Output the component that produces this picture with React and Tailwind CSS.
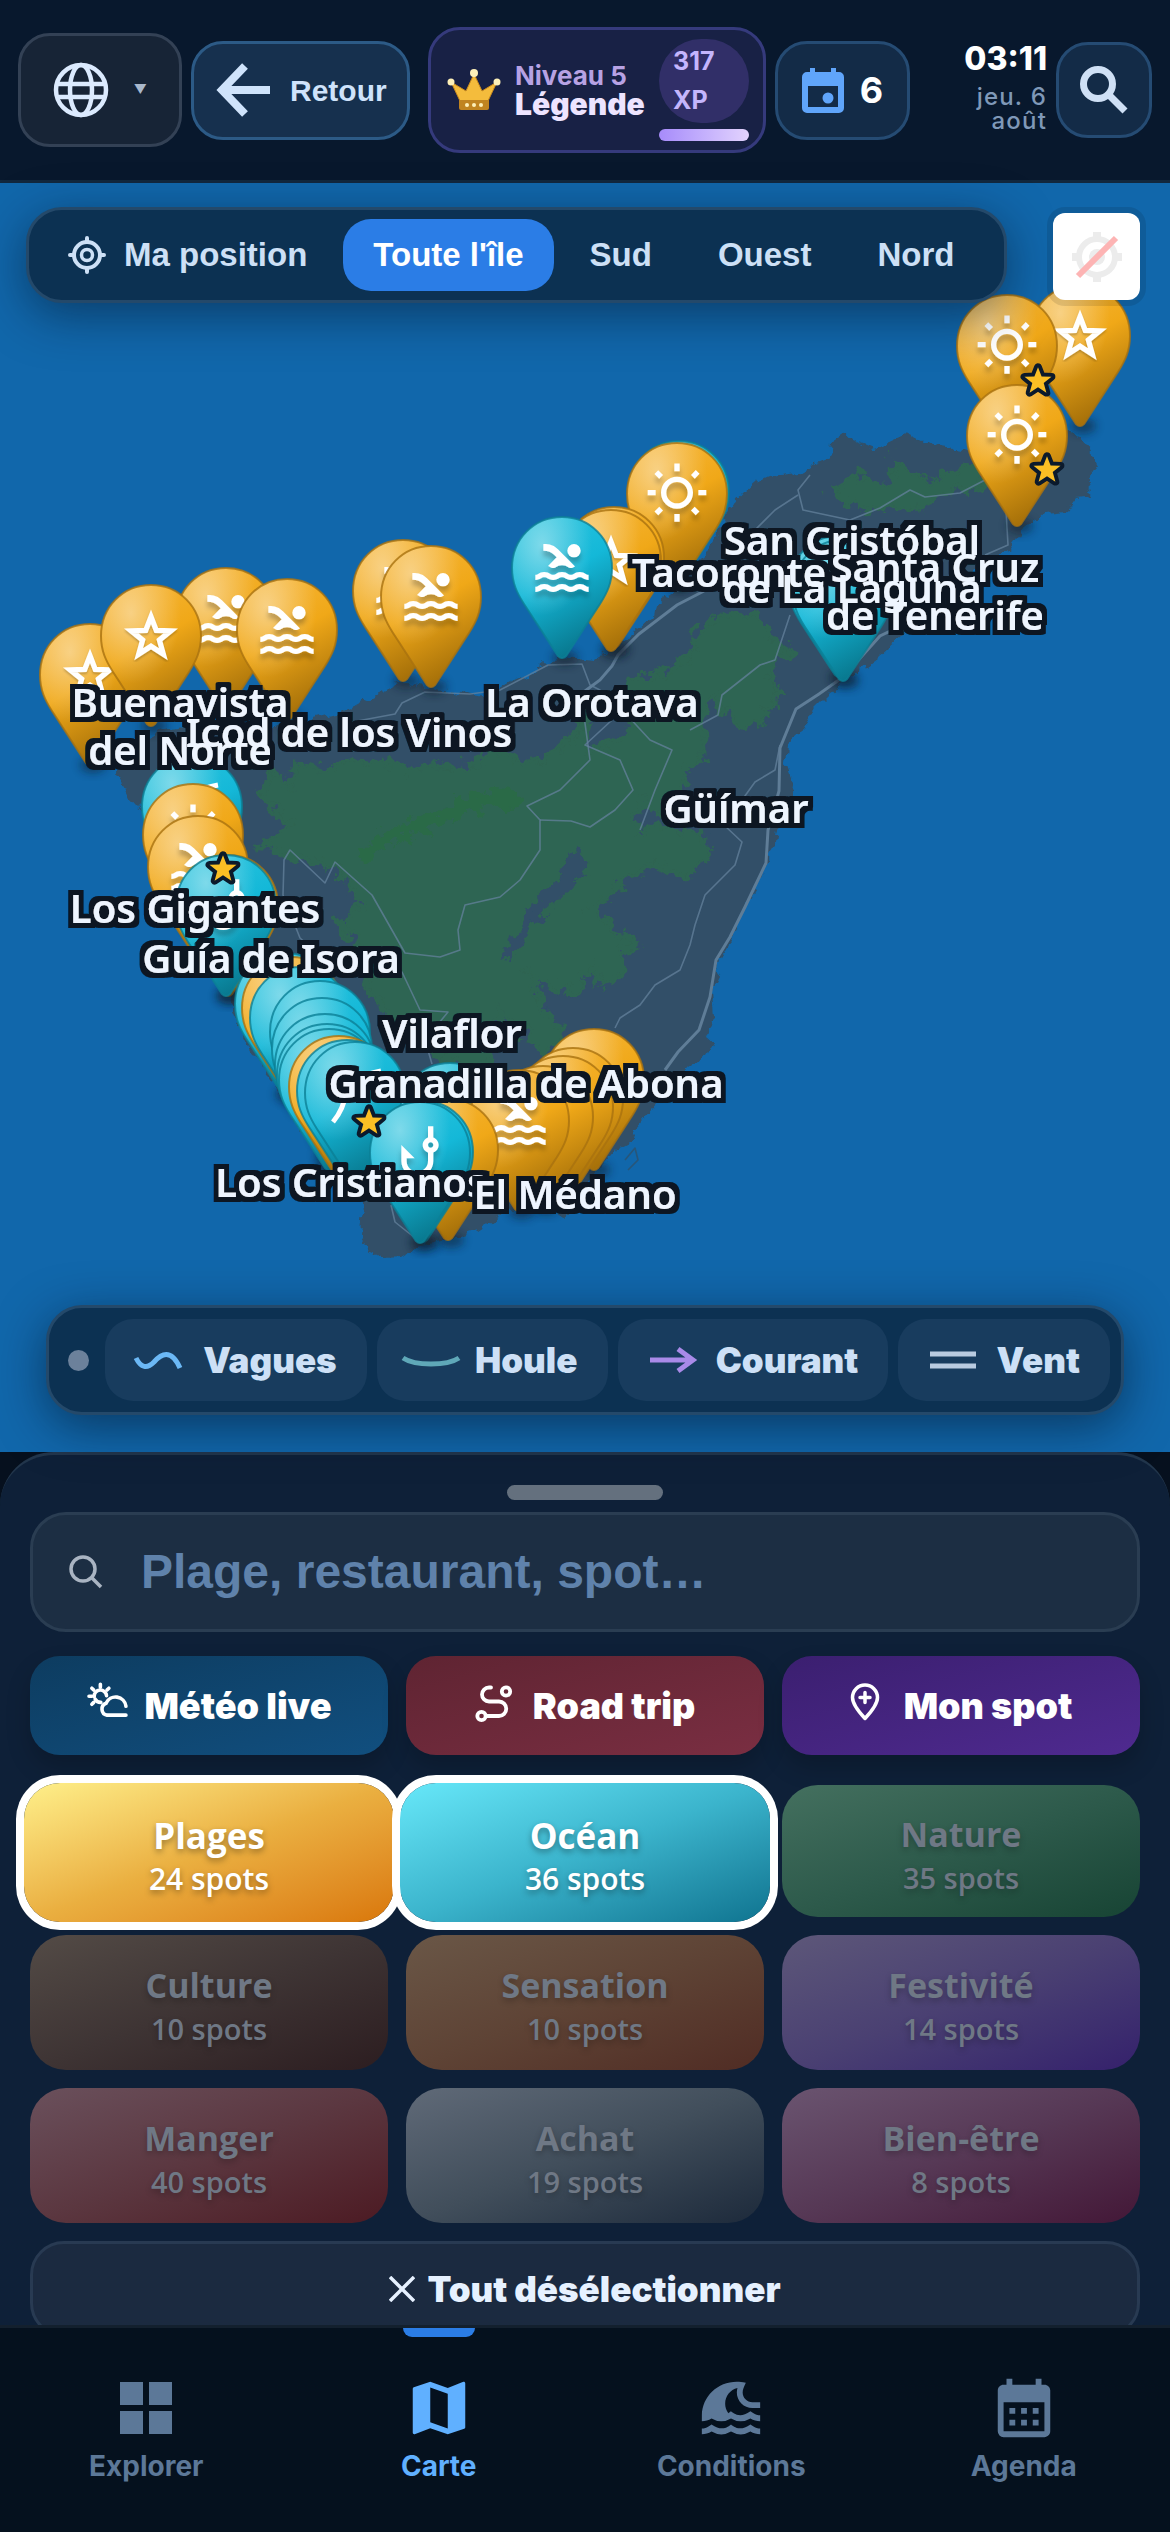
import React, { useState } from "react";
import { MdPool, MdOutlineWbSunny, MdPhishing, MdMap, MdTsunami, MdCalendarMonth } from "react-icons/md";

const ICONS = {
  swim: MdPool,
  sun: MdOutlineWbSunny,
  hook: MdPhishing,
};

// x = tip of the pin, y = top of the pin, in map units
const PINS = [
  { x: 1080, y: 285, kind: "gold", icon: "star" },
  { x: 1007, y: 295, kind: "gold", icon: "sun", fav: [1038, 381] },
  { x: 1017, y: 385, kind: "gold", icon: "sun", fav: [1047, 470] },
  { x: 679, y: 441, kind: "cyan" },
  { x: 677, y: 443, kind: "gold", icon: "sun" },
  { x: 614, y: 507, kind: "gold" },
  { x: 611, y: 510, kind: "gold", icon: "star" },
  { x: 562, y: 517, kind: "cyan", icon: "swim" },
  { x: 839, y: 536, kind: "cyan" },
  { x: 843, y: 540, kind: "cyan" },
  { x: 403, y: 540, kind: "gold", icon: "swim" },
  { x: 431, y: 546, kind: "gold", icon: "swim" },
  { x: 226, y: 568, kind: "gold", icon: "swim" },
  { x: 287, y: 579, kind: "gold", icon: "swim" },
  { x: 90, y: 624, kind: "gold", icon: "star" },
  { x: 151, y: 585, kind: "gold", icon: "star" },
  { x: 192, y: 756, kind: "cyan", icon: "rod" },
  { x: 193, y: 784, kind: "gold", icon: "sun" },
  { x: 198, y: 816, kind: "gold", icon: "swim" },
  { x: 228, y: 855, kind: "gold" },
  { x: 226, y: 855, kind: "cyan", icon: "hook", fav: [223, 869] },
  { x: 285, y: 953, kind: "cyan" },
  { x: 292, y: 957, kind: "gold" },
  { x: 300, y: 967, kind: "cyan" },
  { x: 320, y: 981, kind: "cyan" },
  { x: 322, y: 998, kind: "cyan" },
  { x: 325, y: 1014, kind: "cyan" },
  { x: 327, y: 1024, kind: "cyan" },
  { x: 329, y: 1029, kind: "cyan" },
  { x: 594, y: 1029, kind: "gold" },
  { x: 339, y: 1036, kind: "gold" },
  { x: 347, y: 1040, kind: "cyan" },
  { x: 355, y: 1042, kind: "cyan", icon: "rod" },
  { x: 573, y: 1048, kind: "gold" },
  { x: 563, y: 1056, kind: "gold" },
  { x: 450, y: 1063, kind: "cyan" },
  { x: 543, y: 1066, kind: "gold" },
  { x: 519, y: 1070, kind: "gold", icon: "swim" },
  { x: 448, y: 1099, kind: "gold" },
  { x: 423, y: 1101, kind: "cyan" },
  { x: 420, y: 1102, kind: "cyan", icon: "hook", fav: [369, 1122] },
];

const TOWNS = [
  { x: 180, y: 717, lines: ["Buenavista", "del Norte"] },
  { x: 349, y: 747, lines: ["Icod de los Vinos"] },
  { x: 592, y: 717, lines: ["La Orotava"] },
  { x: 852, y: 555, lines: ["San Cristóbal", "de La Laguna"] },
  { x: 729, y: 587, lines: ["Tacoronte"] },
  { x: 935, y: 582, lines: ["Santa Cruz", "de Tenerife"] },
  { x: 736, y: 823, lines: ["Güímar"] },
  { x: 195, y: 923, lines: ["Los Gigantes"] },
  { x: 271, y: 973, lines: ["Guía de Isora"] },
  { x: 452, y: 1048, lines: ["Vilaflor"] },
  { x: 526, y: 1098, lines: ["Granadilla de Abona"] },
  { x: 351, y: 1197, lines: ["Los Cristianos"] },
];

const CATEGORIES = [
  { name: "Plages", count: 24, bg: "from-[#fef08a] via-[#eaaf40] to-[#d97706]" },
  { name: "Océan", count: 36, bg: "from-[#67e8f9] via-[#3bb4cc] to-[#0e7490]" },
  { name: "Nature", count: 35, bg: "from-[#44705f] via-[#2d5a4b] to-[#174434]" },
  { name: "Culture", count: 10, bg: "from-[#534b46] via-[#3e3434] to-[#2c1d20]" },
  { name: "Sensation", count: 10, bg: "from-[#6a5747] via-[#5e4335] to-[#502c24]" },
  { name: "Festivité", count: 14, bg: "from-[#5d5779] via-[#4a4072] to-[#35206c]" },
  { name: "Manger", count: 40, bg: "from-[#6a505c] via-[#5b3740] to-[#4c1a23]" },
  { name: "Achat", count: 19, bg: "from-[#606a78] via-[#414e5b] to-[#1d2a3b]" },
  { name: "Bien-être", count: 8, bg: "from-[#6a5470] via-[#563855] to-[#431737]" },
];

const REGIONS = ["Toute l'île", "Sud", "Ouest", "Nord"];

const COAST =
  "M115 772 L135 745 165 728 205 722 250 728 300 722 337 713 358 705 377 695 402 683 432 688 459 693 486 697 509 683 536 672 551 660 564 657 593 660 620 644 639 630 654 616 656 605 675 591 700 562 719 530 731 508 742 494 754 483 769 476 800 473 815 464 830 458 832 441 845 432 853 439 876 448 907 434 922 441 941 446 968 450 1000 440 1040 446 1060 425 1083 439 1092 455 1098 466 1087 483 1091 496 1077 498 1067 512 1044 514 1022 530 1010 548 985 562 960 585 930 612 903 634 876 659 853 676 838 687 830 694 815 709 800 734 788 744 786 766 794 787 788 809 777 830 775 842 768 853 764 873 745 907 730 943 716 967 720 977 712 993 714 1018 707 1037 714 1043 707 1055 688 1067 665 1093 653 1108 634 1130 630 1142 615 1150 596 1173 577 1200 565 1220 545 1206 509 1210 478 1230 455 1237 421 1245 402 1257 383 1258 367 1250 361 1237 363 1203 340 1175 300 1130 276 1087 249 1047 237 1020 225 990 200 950 185 900 170 860 141 808 132 803 126 790Z";

const FOREST =
  "M260 795 L275 772 288 785 300 765 330 768 350 758 385 762 410 768 470 765 500 750 520 765 560 750 580 728 590 700 586 748 615 745 639 716 627 680 666 673 696 651 702 626 735 612 761 619 770 635 790 651 770 668 777 691 761 723 735 726 715 694 702 700 704 737 704 759 685 770 681 782 692 800 672 822 640 800 636 832 649 827 699 830 710 850 687 877 653 863 615 890 592 910 626 937 638 947 620 952 622 977 600 983 592 965 577 993 553 987 530 977 546 1010 565 1033 542 1053 520 1025 501 1010 490 1066 460 1068 425 1045 402 1027 367 987 367 953 337 923 363 907 337 870 283 853 258 848 290 825Z";

const GlobeIcon = () => (
  <svg className="h-16 w-14" viewBox="0 0 56 64" fill="none" stroke="#dbeafe" strokeWidth="4.5">
    <circle cx="28" cy="32" r="25" />
    <ellipse cx="28" cy="32" rx="11" ry="25" />
    <path d="M4 26h48M4 39h48" />
  </svg>
);

const TargetIcon = () => (
  <svg className="h-[38px] w-[38px]" viewBox="0 0 38 38" fill="none" stroke="currentColor" strokeWidth="4" strokeLinecap="round">
    <circle cx="19" cy="19" r="13" />
    <circle cx="19" cy="19" r="5.5" strokeWidth="3.5" />
    <path d="M19 2v4M19 32v4M2 19h4M32 19h4" />
  </svg>
);

const CrownIcon = () => (
  <svg className="h-[46px] w-[54px]" viewBox="0 0 54 46">
    <path d="M13 34 4 15l15 9L27 7l8 17 15-9-9 19Z" fill="#f4bc3c" stroke="#c98a1e" />
    <path d="M12 33h30v8a2 2 0 0 1-2 2H14a2 2 0 0 1-2-2Z" fill="#c08420" />
    <g fill="#fdf0b8">
      <circle cx="27" cy="6" r="4" />
      <circle cx="4" cy="15" r="3.5" />
      <circle cx="50" cy="15" r="3.5" />
      <circle cx="20" cy="38" r="2" />
      <circle cx="27" cy="38" r="2" />
      <circle cx="34" cy="38" r="2" />
    </g>
  </svg>
);

const DayIcon = () => (
  <svg className="h-12 w-[42px]" viewBox="0 0 42 48">
    <path
      fillRule="evenodd"
      d="M8 2h5v4h16V2h5v4h3a5 5 0 0 1 5 5v31a5 5 0 0 1-5 5H5a5 5 0 0 1-5-5V11a5 5 0 0 1 5-5h3Zm-2 18v21h30V20Z"
      fill="#60a5fa"
    />
    <circle cx="26" cy="32" r="5.5" fill="#60a5fa" />
  </svg>
);

const MagnifierIcon = () => (
  <svg className="h-[50px] w-[50px]" viewBox="0 0 50 50" fill="none" stroke="#cfe0f5" strokeWidth="7">
    <circle cx="19" cy="19" r="14.5" />
    <path d="m29 29 17 17" />
  </svg>
);

const WeatherIcon = () => (
  <svg className="mb-3 h-[36px] w-[42px]" viewBox="0 0 42 38" fill="none" stroke="currentColor" strokeWidth="3.8" strokeLinecap="round">
    <path d="M7.5 15.5a6.500 6.500 0 1 1 13 -1M8.500 18a6.500 6.500 0 0 0 6 3.500" />
    <path d="M14 2.500v3M2 15h3M5 6.500l2 2M23 6.500l-2 2M5 23.500l2-2" />
    <path d="M21 35h20M41 25.500A11 11 0 0 0 20 22.500a6.500 6.500 0 0 0 1 12.500" />
  </svg>
);

const RouteIcon = () => (
  <svg className="mb-1 h-[38px] w-[38px]" viewBox="0 0 38 38" fill="none" stroke="currentColor" strokeWidth="3.800" strokeLinecap="round">
    <circle cx="31" cy="6.500" r="4.200" />
    <circle cx="6.500" cy="31" r="4.200" />
    <path d="M16 2.500h-2a7 7 0 0 0 0 14h10a7 7 0 0 1 0 14.500H12" />
  </svg>
);

const SpotIcon = () => (
  <svg className="mb-2 h-[38px] w-[30px]" viewBox="0 0 30 38" fill="none" stroke="currentColor" strokeWidth="3.500" strokeLinecap="round">
    <path d="M15 35.500C8 28 2.500 21 2.500 14.500a12.500 12.500 0 0 1 25 0C27.500 21 22 28 15 35.500Z" strokeLinejoin="round" />
    <path d="M15 9.500v10M10 14.500h10" />
  </svg>
);

const STAR = "M0 -23 6 -7.500 22.500 -7 9.500 3.500 14 19.500 0 10.500 -14 19.500 -9.500 3.500 -22.500 -7 -6 -7.500Z";

const PinGlyph = ({ icon }) => {
  if (icon === "star") {
    return <path d={STAR} transform="translate(50 52) scale(0.88)" fill="none" stroke="#fff" strokeWidth="6" filter="url(#glyph)" />;
  }
  if (icon === "rod") {
    return <path d="M28 80C38 68 40 58 41 50 44 38 60 32 76 29" fill="none" stroke="#fff" strokeWidth="5" />;
  }
  const Glyph = ICONS[icon];
  return <Glyph x="18" y="19" size={64} color="#fff" filter="url(#glyph)" />;
};

const Pin = ({ x, y, kind, icon }) => {
  const shape = "M50 0C22 0 0 22 0 51 0 66 5 76 12 87L46 139Q50 143 54 139L88 87C95 76 100 66 100 51 100 22 78 0 50 0Z";
  return (
    <g transform={`translate(${x - 50} ${y})`}>
      <ellipse cx="53" cy="141" rx="13" ry="8" fill="#0b1a2a" opacity="0.5" filter="url(#soft)" />
      <path d={shape} fill={`url(#${kind})`} />
      <path
        d={shape}
        fill="url(#shine)"
        stroke={kind === "gold" ? "#a9720f" : "#0b7f96"}
        strokeWidth="2"
        strokeOpacity="0.8"
      />
      {icon && <PinGlyph icon={icon} />}
    </g>
  );
};

const Town = ({ x, y, lines }) => (
  <text x={x} y={y} textAnchor="middle">
    {lines.map((line, i) => (
      <tspan key={line} x={x} dy={i ? 48 : 0}>
        {line}
      </tspan>
    ))}
  </text>
);

const IslandMap = () => (
  <svg className="block h-auto w-full bg-[#1167ab]" viewBox="0 183 1170 1269" role="img" aria-label="Carte de Tenerife">
    <defs>
      <linearGradient id="gold" x1="0.2" y1="0" x2="0.6" y2="1">
        <stop offset="0" stopColor="#f6b63a" />
        <stop offset="0.45" stopColor="#f0a818" />
        <stop offset="1" stopColor="#a06c08" />
      </linearGradient>
      <linearGradient id="cyan" x1="0.2" y1="0" x2="0.6" y2="1">
        <stop offset="0" stopColor="#2bc4de" />
        <stop offset="0.45" stopColor="#14b8d8" />
        <stop offset="1" stopColor="#08748a" />
      </linearGradient>
      <radialGradient id="shine" cx="0.3" cy="0.2" r="0.5">
        <stop offset="0" stopColor="#fff" stopOpacity="0.42" />
        <stop offset="1" stopColor="#fff" stopOpacity="0" />
      </radialGradient>
      <filter id="soft" x="-50%" y="-50%" width="200%" height="200%">
        <feGaussianBlur stdDeviation="4" />
      </filter>
      <filter id="glyph" x="-20%" y="-20%" width="140%" height="140%">
        <feDropShadow dx="0" dy="2" stdDeviation="1" floodColor="#000" floodOpacity="0.25" />
      </filter>
      <filter id="rough" x="-5%" y="-5%" width="110%" height="110%">
        <feTurbulence type="fractalNoise" baseFrequency="0.09" numOctaves="3" seed="4" />
        <feDisplacementMap in="SourceGraphic" scale="12" xChannelSelector="R" yChannelSelector="G" />
      </filter>
      <filter id="rougher" x="-5%" y="-5%" width="110%" height="110%">
        <feTurbulence type="fractalNoise" baseFrequency="0.08" numOctaves="4" seed="9" />
        <feDisplacementMap in="SourceGraphic" scale="26" xChannelSelector="R" yChannelSelector="G" />
      </filter>
      <filter id="halo" filterUnits="userSpaceOnUse" x="0" y="183" width="1170" height="1269">
        <feMorphology in="SourceAlpha" operator="dilate" radius="5" result="fat" />
        <feFlood floodColor="#081624" />
        <feComposite in2="fat" operator="in" result="dark" />
        <feMerge>
          <feMergeNode in="dark" />
          <feMergeNode in="SourceGraphic" />
        </feMerge>
      </filter>
    </defs>

    <path d={COAST} fill="#305068" filter="url(#rough)" />
    <g filter="url(#rougher)">
      <path d={FOREST} fill="#2e6552" stroke="#2e6552" strokeWidth="5" />
      <path
        d="M830 491 861 476 888 484 893 455 903 473 926 476 940 482 953 469 980 466 985 487 934 494 922 509 900 505 876 509 853 507Z"
        fill="#2e6552"
        stroke="#2e6552"
        strokeWidth="4"
      />
      <path d="M574 850 593 867 570 888 545 910 522 945 507 962 503 947 536 903 558 880Z" fill="#305068" />
      <path d="M360 856 385 838 430 822 465 806 500 796 520 806" fill="none" stroke="#2c6b46" strokeWidth="14" />
    </g>

    {/* roads */}
    <g fill="none" stroke="#64829c" strokeWidth="1.6" strokeOpacity="0.75" strokeLinejoin="round">
      <path d="M340 735 352 722 395 714 402 703 425 692 470 694 500 690 548 665 582 664 590 685 600 690 584 716 590 760 560 790 527 806 540 820 540 850 520 880 500 897 465 905 458 930 460 950 440 957 405 953 372 895 335 862 325 883 290 850 284 860 283 895 300 938 325 960 402 972 420 1010 448 1012 425 1040 432 1064" />
      <path d="M540 820 571 821 590 827 615 810 633 790 620 760 585 745 612 720 600 700 626 714 650 740 672 750 655 790 640 830" />
      <path d="M790 615 775 660 760 665 722 695 718 715 690 730" />
      <path d="M810 475 798 490 803 510 850 520 880 508 910 490 925 497 960 493 985 480" />
      <path d="M798 495 775 510 755 530 740 545" />
      <path d="M1006 510 1008 545 985 555" />
      <path d="M780 745 775 770 755 782 724 825 742 842 735 865 705 895 695 925 690 945 680 970 655 985 640 1005 620 1018 615 1028" />
      <path d="M391 1205 395 1222 415 1238" />
      <path d="M625 1160 635 1148 638 1160 628 1170" stroke="#305068" />
    </g>
    <path
      d="M585 691 600 680 612 666 618 655 639 634 677 605 704 591M903 625 880 636 843 677 819 694 796 709 780 748 779 791 768 830 766 863 745 907 730 937 716 960 710 997 699 1030 678 1052 665 1070"
      fill="none"
      stroke="#5f7d97"
      strokeWidth="3"
    />

    {PINS.map((pin, i) => (
      <Pin key={i} {...pin} />
    ))}

    {PINS.filter((pin) => pin.fav).map(({ fav: [x, y] }) => (
      <path
        key={`${x}-${y}`}
        d={STAR}
        transform={`translate(${x} ${y}) scale(0.6)`}
        fill="#fbbf24"
        stroke="#0b1a2c"
        strokeWidth="13"
        strokeLinejoin="round"
        paintOrder="stroke"
      />
    ))}

    <g className="font-['Noto_Sans',sans-serif] text-[40px] font-semibold" fill="#eef5ff">
      <g filter="url(#halo)">
        {TOWNS.map((town) => (
          <Town key={town.lines[0]} {...town} />
        ))}
      </g>
      <g filter="url(#halo)">
        <Town x={575} y={1209} lines={["El Médano"]} />
      </g>
    </g>
  </svg>
);

const Header = () => (
  <header className="flex items-center gap-[9px] border-b-[3px] border-[#12283e] bg-[#08182d] px-[18px] py-[27px] font-['Inter',sans-serif]">
    <button aria-label="Langue" className="flex h-[114px] w-[164px] items-center justify-between rounded-[32px] border-[3px] border-[#334155] bg-[#172436] pr-8 pl-8">
      <GlobeIcon />
      <span className="text-[13px] text-[#a9b8cc]">▼</span>
    </button>
    <button className="mr-[9px] flex h-[99px] w-[219px] items-center gap-5 rounded-[32px] border-[3px] border-[#2c5a86] bg-[#16304e] pl-[22px] font-['Liberation_Sans',sans-serif] text-[30px] font-bold text-[#cfe3fb]">
      <svg className="h-[54px] w-[54px]" viewBox="0 0 54 54" fill="none" stroke="#cfe3fb" strokeWidth="8">
        <path d="M54 27H7M29 3 6 27l23 24" />
      </svg>
      Retour
    </button>
    <button className="flex h-[126px] w-[338px] items-center rounded-[32px] border-[3px] border-[#353a7c] bg-[#182145] pl-4 text-left">
      <CrownIcon />
      <span className="ml-[14px] flex flex-1 flex-col font-bold">
        <span className="text-[26px] leading-[27px] text-[#b7a2e4]">Niveau 5</span>
        <span className="text-[30px] leading-[30px] font-black text-[#ede4ff]">Légende</span>
      </span>
      <span className="mr-[14px] flex w-[90px] flex-col gap-[6px]">
        <span className="rounded-full bg-[#312f68] px-[14px] py-[3px] text-[25px] leading-[39px] font-bold text-[#c4b5fd]">317 XP</span>
        <span className="h-3 rounded-full bg-linear-to-r from-[#a78bfa] to-[#e3d3fd]" />
      </span>
    </button>
    <button aria-label="Agenda du jour" className="flex h-[99px] w-[135px] items-center justify-center gap-4 rounded-[32px] border-[3px] border-[#254b73] bg-[#132b47] text-[36px] font-bold text-white">
      <DayIcon />6
    </button>
    <div className="flex flex-1 flex-col items-end self-start pt-[14px] text-right">
      <span className="text-[32px] leading-9 font-extrabold text-white">03:11</span>
      <span className="mt-2 w-[90px] text-[24px] leading-6 font-medium tracking-wider text-[#7f98b8]">jeu. 6 août</span>
    </div>
    <button aria-label="Rechercher" className="flex h-24 w-24 items-center justify-center rounded-[32px] border-[3px] border-[#254b73] bg-[#132b47]">
      <MagnifierIcon />
    </button>
  </header>
);

const LAYERS = [
  { name: "Vagues", icon: <path d="M1 18C6 28 12 29 19 22 26 14 36 8 45 28" stroke="#6bb8f5" /> },
  { name: "Houle", icon: <path d="M-4 18C8 26 40 26 52 18" stroke="#5fa8b8" /> },
  { name: "Courant", icon: <path d="M2 20h42M30 9l15 11-15 11" stroke="#a98ae8" /> },
  { name: "Vent", icon: <path d="M1 14h46M1 26h46" stroke="#b9cbe0" /> },
];

const MapSection = () => {
  const [region, setRegion] = useState("Toute l'île");
  return (
    <section className="relative">
      <IslandMap />

      <div className="absolute top-6 left-[26px] flex gap-[6px] rounded-[36px] border-[3px] border-[#24496a] bg-[#0c3152] p-[9px] pr-5 font-['Liberation_Sans',sans-serif] text-[33px] leading-[72px] font-bold text-[#cde0f6] shadow-[0_12px_48px_rgba(4,20,40,0.5)]">
        <button className="flex items-center gap-[18px] px-[30px]">
          <TargetIcon />
          Ma position
        </button>
        {REGIONS.map((name) => (
          <button
            key={name}
            onClick={() => setRegion(name)}
            className={`rounded-[28px] px-[30px] ${region === name ? "bg-[#2b7de6] text-white" : ""}`}
          >
            {name}
          </button>
        ))}
      </div>

      <button aria-label="Localisation désactivée" className="absolute top-[30px] right-[30px] flex h-[87px] w-[87px] items-center justify-center rounded-xl bg-white shadow-[0_0_0_6px_rgba(0,0,0,0.1)]">
        <svg className="h-[52px] w-[52px]" viewBox="0 0 52 52" fill="none" stroke="#ececec" strokeWidth="6">
          <circle cx="26" cy="26" r="18" />
          <circle cx="26" cy="26" r="8" fill="#ececec" stroke="none" />
          <path d="M26 1v6M26 45v6M1 26h6M45 26h6" strokeWidth="8" />
          <path d="M7 45 45 7" stroke="#fdb4b4" />
        </svg>
      </button>

      <div className="absolute inset-x-[46px] bottom-[37px] flex items-center gap-[10px] rounded-[36px] border-[3px] border-[#24496a] bg-[#0c3152] p-[11px] pl-[19px] shadow-[0_12px_48px_rgba(4,20,40,0.55)]">
        <span className="mr-[6px] h-[21px] w-[21px] rounded-full bg-[#6c819b]" />
        {LAYERS.map(({ name, icon }) => (
          <button
            key={name}
            className="flex h-[82px] grow items-center justify-center gap-5 rounded-[28px] bg-[#183c5e] font-['Inter',sans-serif] text-[35px] font-black text-[#cde0f6]"
          >
            <svg className="h-10 w-12 overflow-visible" viewBox="0 0 48 40" fill="none" strokeWidth="5">
              {icon}
            </svg>
            {name}
          </button>
        ))}
      </div>
    </section>
  );
};

const CategoryCard = ({ name, count, bg, active, onClick }) => (
  <button
    onClick={onClick}
    aria-pressed={active}
    className={`flex flex-col items-center justify-center rounded-[36px] bg-linear-to-br pt-2 font-['Open_Sans',sans-serif] ${bg} ${
      active
        ? "relative -mx-[6px] -mt-[2px] -mb-[5px] text-white ring-8 ring-white text-shadow-[0_3px_6px_rgba(0,0,0,0.35)]"
        : "text-[#6f7885] text-shadow-[0_3px_6px_rgba(0,0,0,0.25)]"
    }`}
  >
    <span className={`leading-[45px] font-bold ${active ? "text-[35px]" : "text-[34px]"}`}>{name}</span>
    <span className={`leading-[42px] font-semibold ${active ? "text-[30px]" : "text-[29px]"}`}>{count} spots</span>
  </button>
);

const Sheet = () => {
  const [selected, setSelected] = useState(["Plages", "Océan"]);
  const toggle = (name) =>
    setSelected((prev) => (prev.includes(name) ? prev.filter((n) => n !== name) : [...prev, name]));

  return (
    <div className="bg-[#06101e]">
      <section className="h-[873px] overflow-hidden rounded-t-[54px] border-t-[3px] border-[#22364c] bg-[#0e2038] px-[30px] pt-[30px]">
        <div className="mx-auto mb-3 h-[15px] w-[156px] rounded-full bg-[#64707e]" />

        <label className="flex h-[120px] items-center gap-[38px] rounded-[36px] border-[3px] border-[#2a3d52] bg-[#1c2e43] pl-9">
          <svg className="h-[34px] w-[34px] shrink-0" viewBox="0 0 34 34" fill="none" stroke="#a9b4c2" strokeWidth="3.500">
            <circle cx="14" cy="14" r="12" />
            <path d="m23 23 9 9" />
          </svg>
          <input
            type="search"
            aria-label="Rechercher un spot"
            placeholder="Plage, restaurant, spot…"
            className="w-full bg-transparent font-['Liberation_Sans',sans-serif] text-[48px] font-bold outline-none placeholder:text-[#5f82ab]"
          />
        </label>

        <div className="mt-6 grid grid-cols-3 gap-[18px] font-['Inter',sans-serif] text-[36px] font-black text-white">
          <button className="flex h-[99px] items-center justify-center gap-4 rounded-[30px] bg-linear-to-br from-[#0d3c60] to-[#114f7f] shadow-[0_12px_24px_rgba(0,0,0,0.2)]">
            <WeatherIcon />
            Météo live
          </button>
          <button className="flex h-[99px] items-center justify-center gap-5 rounded-[30px] bg-linear-to-br from-[#5f2432] to-[#7a2e42] shadow-[0_12px_24px_rgba(0,0,0,0.2)]">
            <RouteIcon />
            Road trip
          </button>
          <button className="flex h-[99px] items-center justify-center gap-6 rounded-[30px] bg-linear-to-br from-[#3b1f70] to-[#4f2a90] shadow-[0_12px_24px_rgba(0,0,0,0.2)]">
            <SpotIcon />
            Mon spot
          </button>
        </div>

        <div className="mt-[30px] grid grid-cols-3 grid-rows-[132px_135px_135px] gap-[18px]">
          {CATEGORIES.map((cat) => (
            <CategoryCard key={cat.name} {...cat} active={selected.includes(cat.name)} onClick={() => toggle(cat.name)} />
          ))}
        </div>

        <button
          onClick={() => setSelected([])}
          className="mt-[18px] flex h-24 w-full items-center justify-center gap-3 rounded-[34px] border-[3px] border-[#283a52] bg-[#1b2a40] font-['Inter',sans-serif] text-[35px] font-black text-[#e6f1ff]"
        >
          <svg className="h-[26px] w-[26px]" viewBox="0 0 26 26" stroke="currentColor" strokeWidth="3.500">
            <path d="m1 1 24 24M25 1 1 25" />
          </svg>
          Tout désélectionner
        </button>
      </section>
    </div>
  );
};

const TABS = [
  {
    name: "Explorer",
    icon: (
      <svg className="h-[70px] w-[70px]" viewBox="0 0 70 70" fill="currentColor">
        <path d="M9 9h23v23H9zM38 9h23v23H38zM9 38h23v23H9zM38 38h23v23H38z" />
      </svg>
    ),
  },
  { name: "Carte", icon: <MdMap size={70} /> },
  { name: "Conditions", icon: <MdTsunami size={70} /> },
  { name: "Agenda", icon: <MdCalendarMonth size={70} /> },
];

const BottomNav = () => {
  const [tab, setTab] = useState("Carte");
  return (
    <nav className="grid grid-cols-4 border-t-[3px] border-[#13202e] bg-[#05111e] pb-12 font-['Inter',sans-serif] text-[28px] font-bold">
      {TABS.map(({ name, icon }) => (
        <button
          key={name}
          onClick={() => setTab(name)}
          className={`flex flex-col items-center ${tab === name ? "text-[#60b0ff]" : "text-[#5c7898]"}`}
        >
          <span className={`mb-9 h-[9px] w-[72px] rounded-b-xl ${tab === name ? "bg-[#2b7de6]" : ""}`} />
          {icon}
          <span className="mt-[5px] leading-9">{name}</span>
        </button>
      ))}
    </nav>
  );
};

export default function App() {
  return (
    <div className="min-h-screen bg-[#05111e]">
      <Header />
      <MapSection />
      <Sheet />
      <BottomNav />
    </div>
  );
}
